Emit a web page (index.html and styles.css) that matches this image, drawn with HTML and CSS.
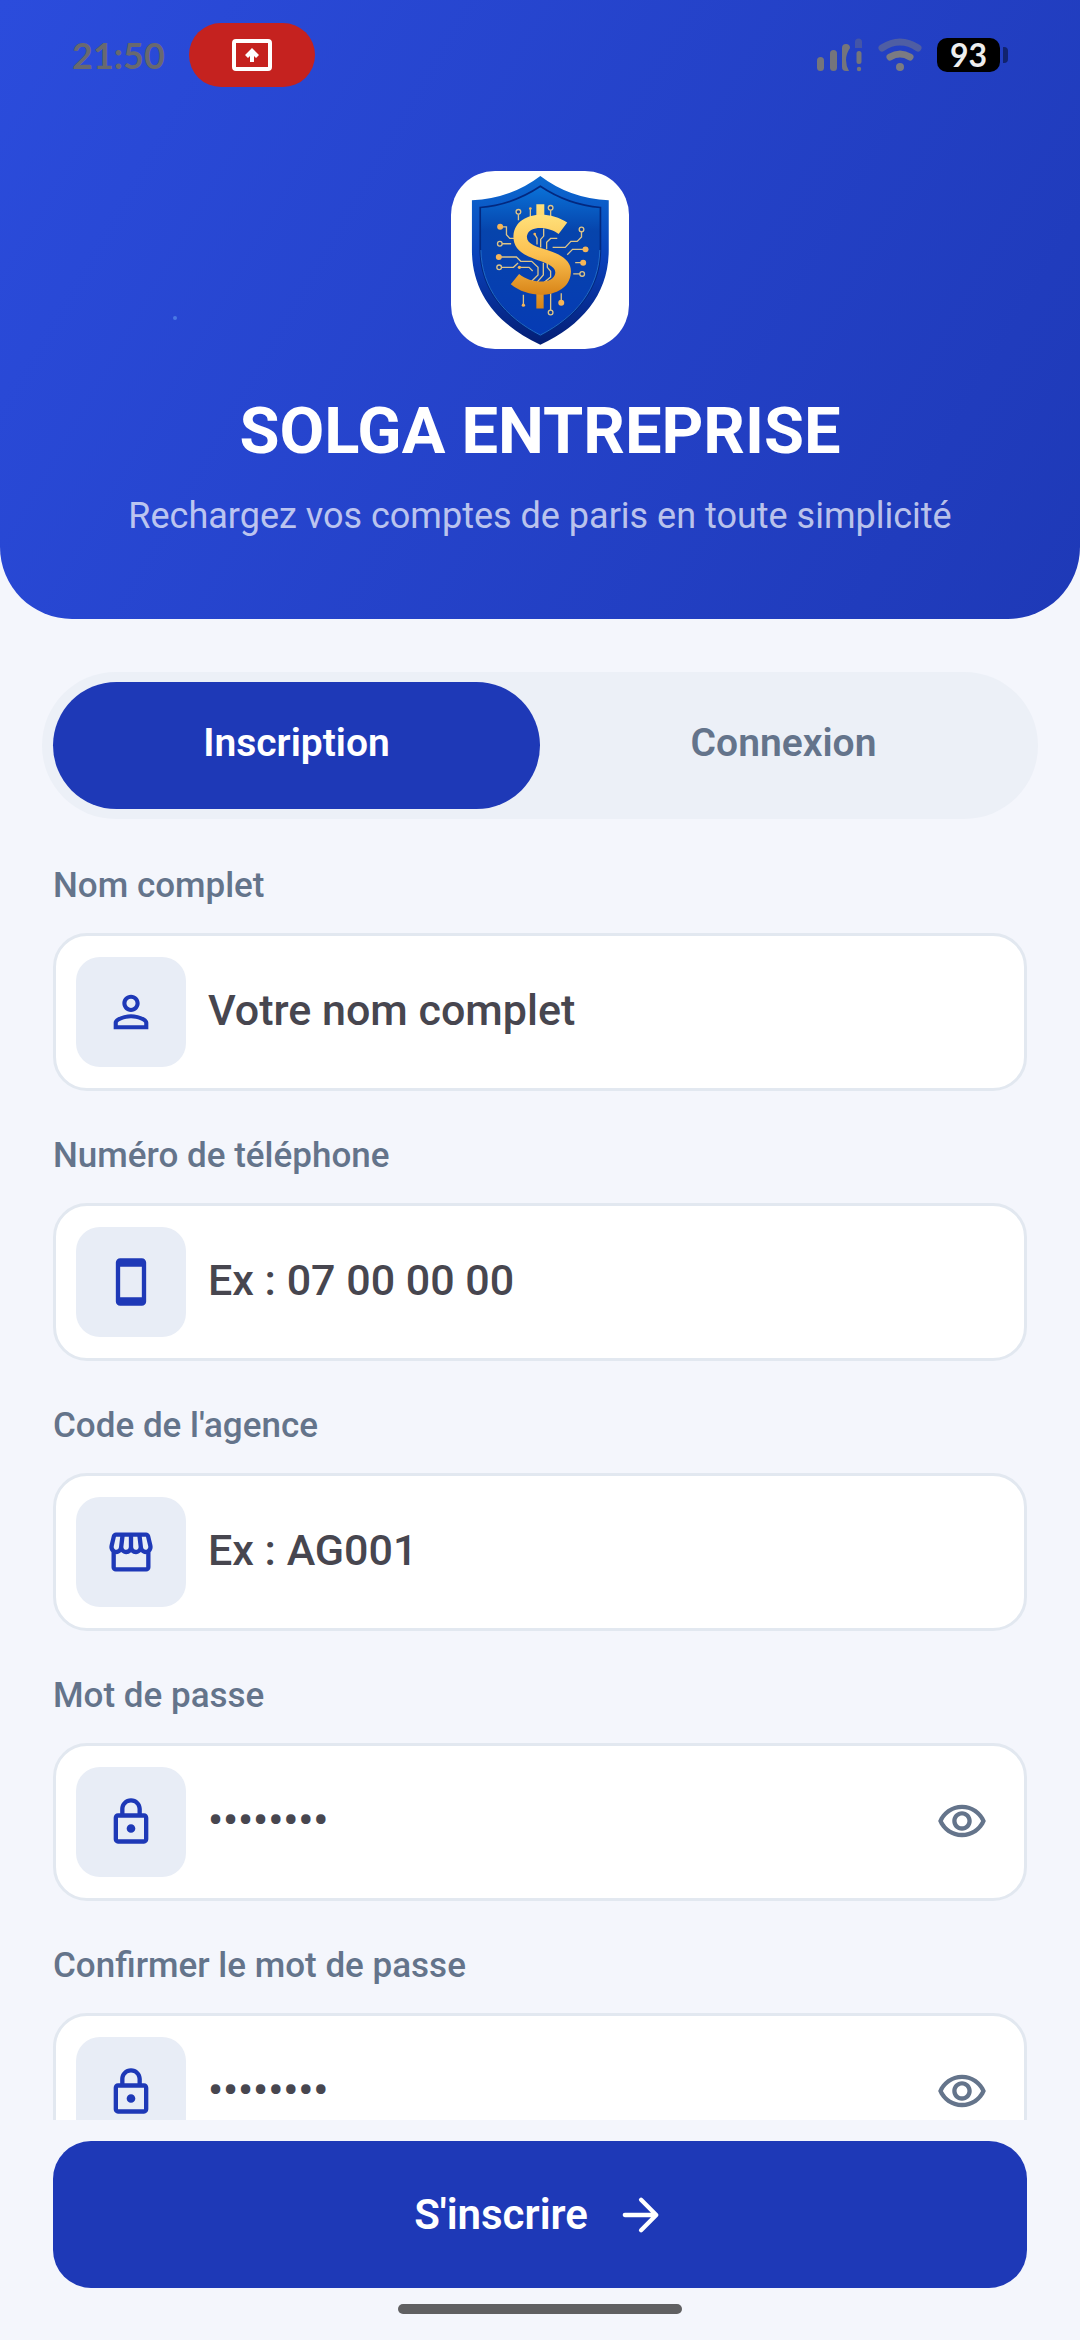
FILE: index.html
```html
<!DOCTYPE html>
<html lang="fr">
<head>
    <meta charset="utf-8">
    <meta name="viewport" content="width=device-width, initial-scale=1">
    <title>Solga Entreprise</title>
    <link rel="stylesheet" href="styles.css">
</head>
<body>
    <header class="hero">
        <div class="statusbar">
            <span class="time">21:50</span>
            <span class="cast">
                <svg width="40" height="32" viewBox="0 0 40 32">
                    <rect x="2" y="2" width="36" height="28" rx="2" fill="none" stroke="#fff" stroke-width="4"/>
                    <path d="M20 9l7 7-3 3-2-2v6h-4v-6l-2 2-3-3z" fill="#fff"/>
                </svg>
            </span>
            <div class="status-icons">
                <svg width="46" height="34" viewBox="0 0 46 34" fill="#75757b">
                    <rect x="0" y="19" width="7" height="14" rx="3.5"/>
                    <rect x="13" y="12" width="7" height="21" rx="3.5"/>
                    <path d="M25 10q0-4 4-4t4 4q-4 6-4 12 0 6 3 11h-3q-4 0-4-4z"/>
                    <path d="M38 10V4q0-3.500 3.500-3.500T45 4v6z" opacity=".4"/>
                    <rect x="39.500" y="13" width="5" height="13" rx="2.500"/>
                    <circle cx="42" cy="31" r="2.200"/>
                </svg>
                <svg width="44" height="34" viewBox="0 0 44 34" fill="none" stroke="#7b7b82" stroke-width="7" stroke-linecap="round">
                    <path d="M4 10q18-12 36 0" opacity=".5"/>
                    <path d="M12 19q10-6 20 0"/>
                    <circle cx="22" cy="29" r="4" fill="#7b7b82" stroke="none"/>
                </svg>
                <span class="battery">93</span>
            </div>
        </div>

        <div class="logo">
            <svg viewBox="62 62 536 536">
                <defs>
                    <linearGradient id="rim" x1="0" y1="0" x2="0" y2="1">
                        <stop offset="0" stop-color="#0b6ad0"/>
                        <stop offset=".5" stop-color="#0a3fb8"/>
                        <stop offset="1" stop-color="#041e74"/>
                    </linearGradient>
                    <linearGradient id="face" x1="0" y1="0" x2="0" y2="1">
                        <stop offset="0" stop-color="#0a72d8"/>
                        <stop offset=".3" stop-color="#0644ac"/>
                        <stop offset="1" stop-color="#063bb4"/>
                    </linearGradient>
                    <linearGradient id="gold" x1="0" y1="0" x2="0" y2="1">
                        <stop offset="0" stop-color="#ffe07a"/>
                        <stop offset=".5" stop-color="#fbc050"/>
                        <stop offset="1" stop-color="#d88418"/>
                    </linearGradient>
                </defs>
                <!-- shield -->
                <path d="M331 77Q420 145 537 150V300C537 430 460 525 331 585C202 525 125 430 125 300V150Q242 145 331 77z" fill="url(#rim)"/>
                <path d="M331 108Q415 164 512 172V295C512 415 440 500 331 558C222 500 150 415 150 295V172Q247 164 331 108z" fill="url(#face)" stroke="#03287f" stroke-width="5"/>
                <path d="M152 300C154 415 222 500 331 556C440 500 508 415 510 300" fill="none" stroke="#2f8be8" stroke-width="2"/>
                <!-- circuit lines -->
                <g fill="none" stroke="#dcc488" stroke-width="4">
                    <path d="M210 230H229V254L239 265H254M209 281H243M206 321H259L272 334H305L324 352V375L304 395M207 352H250L264 339M268 352H297L308 363M265 185V210M301 175V203M362 173V203M341 235V258L332 268V292M314 252L321 264V283M382 265H362L350 277V298M455 238V261L442 274H423L406 292H368M467 298H428L412 314M460 338H436M457 372H430M340 338V375L320 398M352 338V352L362 364V381L342 398M280 435V466M362 430V488M394 430V459"/>
                </g>
                <g fill="#0b3f9f" stroke="#dcc488" stroke-width="4">
                    <circle cx="265" cy="185" r="7"/>
                    <circle cx="362" cy="173" r="7"/>
                    <circle cx="209" cy="281" r="7"/>
                    <circle cx="207" cy="352" r="7"/>
                    <circle cx="455" cy="238" r="7"/>
                    <circle cx="457" cy="372" r="7"/>
                    <circle cx="362" cy="488" r="7"/>
                </g>
                <g fill="#f6b557">
                    <circle cx="210" cy="230" r="9"/>
                    <circle cx="206" cy="321" r="9"/>
                    <circle cx="467" cy="298" r="9"/>
                    <circle cx="460" cy="338" r="9"/>
                    <circle cx="394" cy="459" r="9"/>
                    <circle cx="301" cy="175" r="4"/>
                    <circle cx="268" cy="352" r="5"/>
                    <circle cx="280" cy="466" r="5"/>
                    <circle cx="314" cy="252" r="4"/>
                </g>
                <!-- gold coin mark -->
                <path d="M319 162H343V210H319zM319 425H341V476H319z" fill="url(#gold)"/>
                <path d="M412 217L386 252C360 229 298 224 291 256C286 282 320 290 358 302C403 317 426 338 423 369C418 442 305 455 242 403L267 372C303 402 372 404 376 369C378 348 345 338 312 326C270 311 249 291 250 257C255 187 352 177 412 217z" fill="url(#gold)"/>
            </svg>
        </div>
        <h1>SOLGA ENTREPRISE</h1>
        <p class="tagline">Rechargez vos comptes de paris en toute simplicité</p>
    </header>

    <main>
        <div class="tabs">
            <button type="button" class="tab active">Inscription</button>
            <button type="button" class="tab">Connexion</button>
        </div>

        <form id="signup">
            <div class="group">
                <label for="name">Nom complet</label>
                <div class="field">
                    <span class="tile">
                        <svg class="icon" viewBox="0 0 24 24"><path d="M12 5.900a2.100 2.100 0 110 4.200 2.100 2.100 0 010-4.200m0 9c2.970 0 6.100 1.460 6.100 2.100v1.100H5.900V17c0-.640 3.130-2.100 6.100-2.100M12 4C9.790 4 8 5.790 8 8s1.790 4 4 4 4-1.790 4-4-1.790-4-4-4zm0 9c-2.670 0-8 1.340-8 4v3h16v-3c0-2.660-5.330-4-8-4z"/></svg>
                    </span>
                    <input type="text" id="name" placeholder="Votre nom complet">
                </div>
            </div>

            <div class="group">
                <label for="phone">Numéro de téléphone</label>
                <div class="field">
                    <span class="tile">
                        <svg class="icon" viewBox="0 0 24 24"><path d="M17 1.010L7 1c-1.100 0-2 .9-2 2v18c0 1.100.9 2 2 2h10c1.100 0 2-.9 2-2V3c0-1.100-.9-1.990-2-1.990zM17 19H7V5h10v14z"/></svg>
                    </span>
                    <input type="tel" id="phone" placeholder="Ex : 07 00 00 00">
                </div>
            </div>

            <div class="group">
                <label for="agency">Code de l'agence</label>
                <div class="field">
                    <span class="tile">
                        <svg class="icon" viewBox="0 0 24 24"><path d="M21.900 8.890l-1.050-4.370c-.22-.9-1-1.520-1.910-1.520H5.050c-.9 0-1.690.63-1.900 1.520L2.100 8.890c-.24 1.020-.02 2.060.62 2.880.08.11.19.19.28.29V19c0 1.100.9 2 2 2h14c1.100 0 2-.9 2-2v-6.940c.09-.09.2-.18.28-.28.64-.82.87-1.870.62-2.890zm-2.990-3.900l1.050 4.370c.1.420.01.84-.25 1.170-.14.18-.44.47-.94.47-.61 0-1.140-.49-1.210-1.140L16.980 5l1.930-.01zM13 5h1.960l.54 4.520c.05.39-.07.78-.33 1.070-.22.26-.54.41-.95.41-.67 0-1.220-.59-1.220-1.310V5zM8.490 9.520L9.040 5H11v4.690c0 .72-.55 1.310-1.290 1.310-.34 0-.65-.15-.89-.41-.25-.29-.37-.68-.33-1.070zm-4.450-.16L5.050 5h1.970l-.58 4.860c-.08.65-.6 1.140-1.210 1.140-.49 0-.8-.29-.93-.47-.27-.32-.36-.75-.26-1.170zM5 19v-6.030c.08.01.15.03.23.03.87 0 1.660-.36 2.240-.95.6.6 1.400.95 2.310.95.87 0 1.650-.36 2.230-.93.59.57 1.390.93 2.290.93.84 0 1.640-.35 2.240-.95.58.59 1.370.95 2.240.95.08 0 .15-.02.23-.03V19H5z"/></svg>
                    </span>
                    <input type="text" id="agency" placeholder="Ex : AG001">
                </div>
            </div>

            <div class="group">
                <label for="password">Mot de passe</label>
                <div class="field">
                    <span class="tile">
                        <svg class="icon" viewBox="0 0 24 24"><path d="M18 8h-1V6c0-2.760-2.240-5-5-5S7 3.240 7 6v2H6c-1.100 0-2 .9-2 2v10c0 1.100.9 2 2 2h12c1.100 0 2-.9 2-2V10c0-1.100-.9-2-2-2zM9 6c0-1.660 1.340-3 3-3s3 1.340 3 3v2H9V6zm9 14H6V10h12v10zm-6-3c1.100 0 2-.9 2-2s-.9-2-2-2-2 .9-2 2 .9 2 2 2z"/></svg>
                    </span>
                    <input type="password" id="password" placeholder="••••••••">
                    <button type="button" class="eye" aria-label="Afficher le mot de passe">
                        <svg class="icon" viewBox="0 0 24 24"><path d="M12 6c3.790 0 7.170 2.130 8.820 5.500C19.170 14.870 15.790 17 12 17s-7.170-2.130-8.820-5.500C4.830 8.130 8.210 6 12 6m0-2C7 4 2.730 7.110 1 11.500 2.730 15.890 7 19 12 19s9.270-3.110 11-7.500C21.270 7.110 17 4 12 4zm0 5c1.380 0 2.500 1.120 2.500 2.500S13.380 14 12 14s-2.500-1.120-2.500-2.500S10.620 9 12 9m0-2c-2.480 0-4.500 2.020-4.500 4.500S9.520 16 12 16s4.500-2.020 4.500-4.500S14.480 7 12 7z"/></svg>
                    </button>
                </div>
            </div>

            <div class="group">
                <label for="confirm">Confirmer le mot de passe</label>
                <div class="field">
                    <span class="tile">
                        <svg class="icon" viewBox="0 0 24 24"><path d="M18 8h-1V6c0-2.760-2.240-5-5-5S7 3.240 7 6v2H6c-1.100 0-2 .9-2 2v10c0 1.100.9 2 2 2h12c1.100 0 2-.9 2-2V10c0-1.100-.9-2-2-2zM9 6c0-1.660 1.340-3 3-3s3 1.340 3 3v2H9V6zm9 14H6V10h12v10zm-6-3c1.100 0 2-.9 2-2s-.9-2-2-2-2 .9-2 2 .9 2 2 2z"/></svg>
                    </span>
                    <input type="password" id="confirm" placeholder="••••••••">
                    <button type="button" class="eye" aria-label="Afficher le mot de passe">
                        <svg class="icon" viewBox="0 0 24 24"><path d="M12 6c3.790 0 7.170 2.130 8.820 5.500C19.170 14.870 15.790 17 12 17s-7.170-2.130-8.820-5.500C4.830 8.130 8.210 6 12 6m0-2C7 4 2.730 7.110 1 11.500 2.730 15.890 7 19 12 19s9.270-3.110 11-7.500C21.270 7.110 17 4 12 4zm0 5c1.380 0 2.500 1.120 2.500 2.500S13.380 14 12 14s-2.500-1.120-2.500-2.500S10.620 9 12 9m0-2c-2.480 0-4.500 2.020-4.500 4.500S9.520 16 12 16s4.500-2.020 4.500-4.500S14.480 7 12 7z"/></svg>
                    </button>
                </div>
            </div>
        </form>
    </main>

    <footer>
        <button type="submit" form="signup" class="submit">
            S'inscrire
            <svg class="icon" viewBox="0 0 24 24"><path d="M5 12h14M12.500 5l7 7-7 7" fill="none" stroke="#fff" stroke-width="2" stroke-linecap="round" stroke-linejoin="round"/></svg>
        </button>
        <div class="homebar"></div>
    </footer>
</body>
</html>
```
FILE: styles.css
```css
*{
    box-sizing: border-box;
}
body{
    margin:0;
    height:100vh;
    display:flex;
    flex-direction: column;
    background-color: #f4f6fc;
    font-family: Roboto, "Noto Sans", sans-serif;
}
button, input{
    font-family: inherit;
    border:none;
    background: none;
    padding:0;
}
svg{
    display:block;
}
.icon{
    width:52px;
    height:52px;
    fill:currentColor;
}

/* header */
.hero{
    position:relative;
    flex:none;
    display:flex;
    flex-direction: column;
    align-items: center;
    padding-bottom:80px;
    border-radius: 0 0 72px 72px;
    background: linear-gradient(120deg, #2b4cdc, #1e39b7);
    color:white;
    text-align: center;
}
/* small spark in the background */
.hero::before{
    content:"";
    position:absolute;
    left:16%;
    top:51%;
    width:4px;
    height:4px;
    border-radius: 50%;
    background-color: #4a78e4;
}
.statusbar{
    width:100%;
    height:110px;
    padding:0 72px;
    display:flex;
    align-items: center;
    font-family: Lato, sans-serif;
    font-weight: 700;
}
.time{
    font-size:36px;
    color:#69696f;
}
.cast{
    display:flex;
    align-items: center;
    justify-content: center;
    width:126px;
    height:64px;
    margin-left:24px;
    border-radius: 32px;
    background-color: #c5221f;
}
.status-icons{
    display:flex;
    align-items: center;
    gap:15px;
    margin-left:auto;
}
.battery{
    position:relative;
    width:63px;
    height:34px;
    margin-right:8px;
    border-radius: 10px;
    background-color: black;
    color:#eee;
    font-size:32px;
    line-height: 34px;
}
.battery::after{
    content:"";
    position:absolute;
    right:-8px;
    top:9px;
    width:5px;
    height:16px;
    border-radius: 0 4px 4px 0;
    background-color: #11236e;
}
.logo{
    width:178px;
    height:178px;
    margin-top:61px;
    border-radius: 44px;
    background-color: white;
    overflow:hidden;
}
h1{
    margin:42px 0 0;
    font-size:65px;
    line-height: 80px;
    font-weight: 700;
}
.tagline{
    margin:22px 0 0;
    font-size:36px;
    line-height: 46px;
    color:rgba(255, 255, 255, .7);
}

/* form */
main{
    flex:1;
    min-height:0;
    overflow:hidden;
    padding:53px 42px 0;
}
.tabs{
    display:flex;
    padding:10px 11px;
    border-radius: 74px;
    background-color: #ecf0f7;
}
.tab{
    flex:1;
    height:127px;
    padding-bottom:6px;
    border-radius: 64px;
    color:#64748b;
    font-size:39px;
    font-weight: 600;
}
.tab.active{
    background-color: #1e39b7;
    color:white;
}
form{
    display:flex;
    flex-direction: column;
    gap:45px;
    padding:47px 11px 0;
}
label{
    display:block;
    margin-bottom:27px;
    font-size:35px;
    line-height: 40px;
    font-weight: 500;
    color:#64748b;
}
.field{
    display:flex;
    align-items: center;
    gap:22px;
    padding:21px 20px;
    border:3px #e2e8f0 solid;
    border-radius: 34px;
    background-color: white;
}
.tile{
    flex:none;
    display:flex;
    align-items: center;
    justify-content: center;
    width:110px;
    height:110px;
    border-radius: 24px;
    background-color: #e8edf6;
    color:#1e39b7;
}
.field input{
    flex:1;
    min-width:0;
    padding-bottom:4px;
    font-size:43px;
    font-weight: 500;
    outline:none;
}
.field input::placeholder{
    color:#47464f;
    opacity:1;
}
.eye{
    margin-right:16px;
    color:#64748b;
}

/* bottom bar */
footer{
    flex:none;
    padding:21px 53px 26px;
}
.submit{
    display:flex;
    align-items: center;
    justify-content: center;
    gap:26px;
    width:100%;
    height:147px;
    border-radius: 38px;
    background-color: #1e39b7;
    color:white;
    font-size:42px;
    font-weight: 600;
}
.homebar{
    width:284px;
    height:10px;
    margin:16px auto 0;
    border-radius: 5px;
    background-color: #606062;
}
```
